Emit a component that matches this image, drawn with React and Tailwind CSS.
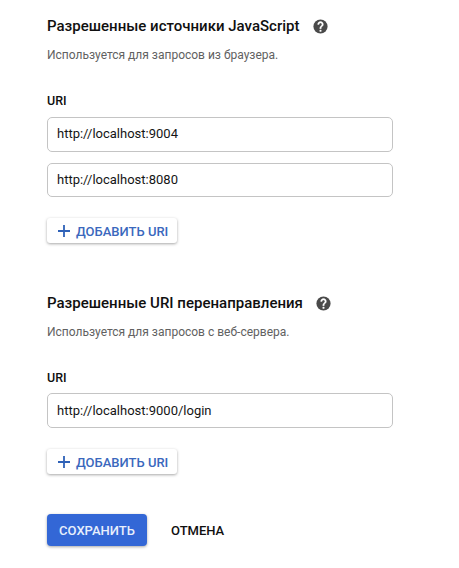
function Help() {
  return (
    <svg className="ml-3 size-[17px] shrink-0" viewBox="0 0 24 24">
      <circle cx="12" cy="12" r="10" fill="#4a4a4a" />
      <path
        d="M11 17h2v2h-2zM15.07 11.25l-.9.92C13.45 12.9 13 13.5 13 15h-2v-.5c0-1.1.45-2.1 1.17-2.83l1.24-1.26c.37-.36.59-.86.59-1.41 0-1.1-.9-2-2-2s-2 .9-2 2H8c0-2.21 1.79-4 4-4s4 1.79 4 4c0 .88-.36 1.68-.93 2.25z"
        fill="#fff"
        stroke="#fff"
        strokeWidth="0.6"
      />
    </svg>
  );
}

function Field({ value }) {
  return (
    <input
      defaultValue={value}
      className="block h-[35px] w-[346px] rounded-[5px] border border-[#c4c4c4] bg-white pl-[9px] pb-[2px] text-[13px] text-[#151515] outline-none nth-2:h-[34px] only:pb-0"
    />
  );
}

function AddButton() {
  return (
    <button className="flex h-[25px] w-[130px] items-center rounded-[3px] bg-white pt-px pl-[11px] text-[13px] font-medium whitespace-nowrap text-[#3b68bd] shadow-[0_1px_3px_rgba(0,0,0,0.35)]">
      <svg className="mr-[6px] size-3" viewBox="0 0 12 12" fill="#2f62b8">
        <path d="M5.1 0h1.8v5.1H12v1.8H6.9V12H5.1V6.9H0V5.1h5.1z" />
      </svg>
      <span className="pt-[2px]">ДОБАВИТЬ URI</span>
    </button>
  );
}

function Section({ title, hint, values, labelGap }) {
  return (
    <section>
      <h2 className="flex h-5 items-center text-[15px] font-medium tracking-[0.01px] whitespace-nowrap text-[#101010]">
        {title}
        <Help />
      </h2>
      <p className="mt-[11px] h-4 text-[12px] leading-4 text-[#616161]">{hint}</p>
      <div className="mt-[30px] h-4 text-[12.5px] leading-4 font-medium text-[#101010]">URI</div>
      <div className={`${labelGap} flex flex-col gap-[11px]`}>
        {values.map((v) => (
          <Field key={v} value={v} />
        ))}
      </div>
      <div className="mt-[21px]">
        <AddButton />
      </div>
    </section>
  );
}

export default function App() {
  return (
    <main className="h-[568px] w-[459px] overflow-hidden bg-white pt-4 pl-[47px] font-[Roboto,sans-serif]">
      <Section
        title="Разрешенные источники JavaScript"
        hint="Используется для запросов из браузера."
        values={["http://localhost:9004", "http://localhost:8080"]}
        labelGap="mt-2"
      />
      <div className="mt-[50px]">
        <Section
          title="Разрешенные URI перенаправления"
          hint="Используется для запросов с веб-сервера."
          values={["http://localhost:9000/login"]}
          labelGap="mt-[7px]"
        />
      </div>
      <div className="mt-10 flex items-center">
        <button className="h-8 w-[100px] rounded-[4px] bg-[#3367d6] pt-[2px] text-[13px] font-medium text-[#e8effc] shadow-[0_1px_3px_rgba(0,0,0,0.35)]">
          СОХРАНИТЬ
        </button>
        <button className="ml-6 pt-[2px] text-[13px] font-medium text-[#101010]">ОТМЕНА</button>
      </div>
    </main>
  );
}
